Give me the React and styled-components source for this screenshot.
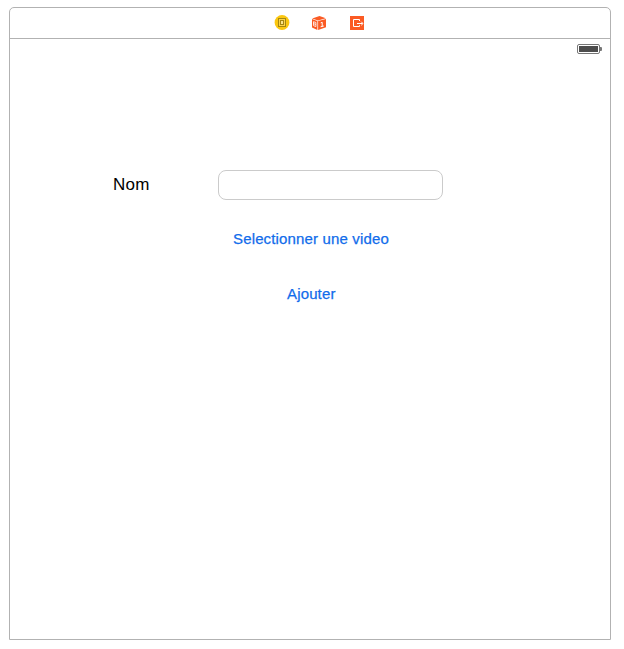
import React from 'react';
import styled, { createGlobalStyle } from 'styled-components';

const GlobalStyle = createGlobalStyle`
  * { box-sizing: border-box; }
  body { margin: 0; background: #fff; }
`;

const Page = styled.div`
  width: 624px;
  height: 649px;
  padding: 7px 0 0 9px;
  background: #fff;
  font-family: "Liberation Sans", Arial, sans-serif;
`;

const Scene = styled.main`
  display: flex;
  flex-direction: column;
  width: 602px;
  height: 633px;
  border: 1px solid #b2b2b2;
  border-radius: 5px 5px 0 0;
`;

const Dock = styled.header`
  display: flex;
  align-items: flex-start;
  gap: 22px;
  height: 31px;
  padding: 7px 0 0 264px;
  border-bottom: 1px solid #b2b2b2;
`;

const DockIcon = styled.svg`
  display: block;
  width: 16px;
  height: 16px;
`;

const StatusBar = styled.div`
  display: flex;
  justify-content: flex-end;
  height: 20px;
  padding: 5px 8px 0 0;
`;

const Form = styled.form`
  display: flex;
  flex-direction: column;
  padding-top: 111px;
`;

const FieldRow = styled.div`
  display: flex;
  align-items: center;
  height: 30px;
  padding-left: 103px;
`;

const Label = styled.label`
  width: 105px;
  font-size: 17px;
  line-height: 20px;
  letter-spacing: 0.25px;
  color: #000;
`;

const TextField = styled.input`
  width: 225px;
  height: 30px;
  padding: 0 7px;
  border: 1px solid #cbcbcb;
  border-radius: 8px;
  background: #fff;
  font: 14px "Liberation Sans", Arial, sans-serif;
  outline: none;
`;

const Action = styled.button`
  align-self: flex-start;
  width: ${(p) => p.$width}px;
  height: 30px;
  margin: ${(p) => p.$top}px 0 0 ${(p) => p.$left}px;
  padding: 0;
  border: 0;
  background: none;
  color: #116ceb;
  font: 15px/30px "Liberation Sans", Arial, sans-serif;
  letter-spacing: 0.15px;
  -webkit-text-stroke: 0.25px currentColor;
  text-align: left;
  white-space: nowrap;
`;

const ControllerIcon = () => (
  <DockIcon viewBox="0 0 16 16">
    <circle cx="8" cy="7.5" r="7.4" fill="#fbc70f" />
    <rect x="4.5" y="3.5" width="7" height="8" fill="#fbd34b" stroke="#a58711" />
    <rect x="6.5" y="5.5" width="3" height="4" fill="#fbe38a" stroke="#a58711" />
  </DockIcon>
);

const ResponderIcon = () => (
  <DockIcon viewBox="0 0 16 16">
    <path d="M7.5 1 13.8 3.3 6 5.4 0.2 3.5Z" fill="#fb5b24" />
    <path d="M0 4.1 5.4 5.9V15L0 12.4Z" fill="#fb5b24" />
    <path d="M6.1 6 14 3.9V12.2L6.1 15Z" fill="#fb5b24" />
    <path d="M1.5 6.7 3.9 7.5V11.6L1.5 10.6ZM1.6 8.6 3.9 9.5" fill="none" stroke="#fff" strokeWidth="0.8" />
    <path d="M8.7 7.9 10.2 7.3V11.3M8.6 11.8 11.8 11" fill="none" stroke="#fff" />
  </DockIcon>
);

const ExitIcon = () => (
  <DockIcon viewBox="0 0 16 16">
    <rect x="0" y="1" width="14" height="14" fill="#fb5b24" />
    <path d="M9.5 6V4.5H3.5V11.5H9.5V10.2M7 8.5H12.5M11.2 6.7 13 8.5 11.2 10.3" fill="none" stroke="#fff" />
  </DockIcon>
);

const Battery = () => (
  <svg width="25" height="10" viewBox="0 0 25 10">
    <rect x="0.5" y="0.5" width="22" height="9" rx="1.5" fill="#fff" stroke="#777" />
    <rect x="2" y="2" width="19" height="6" fill="#4d4d4d" />
    <path d="M23 3h1q1 0 1 1v2q0 1-1 1h-1Z" fill="#777" />
  </svg>
);

export default function App() {
  return (
    <>
      <GlobalStyle />
      <Page>
        <Scene>
          <Dock>
            <ControllerIcon />
            <ResponderIcon />
            <ExitIcon />
          </Dock>
          <StatusBar>
            <Battery />
          </StatusBar>
          <Form>
            <FieldRow>
              <Label htmlFor="nom">Nom</Label>
              <TextField id="nom" />
            </FieldRow>
            <Action type="button" $width={158} $top={24} $left={223}>Selectionner une video</Action>
            <Action type="button" $width={52} $top={25} $left={277}>Ajouter</Action>
          </Form>
        </Scene>
      </Page>
    </>
  );
}
